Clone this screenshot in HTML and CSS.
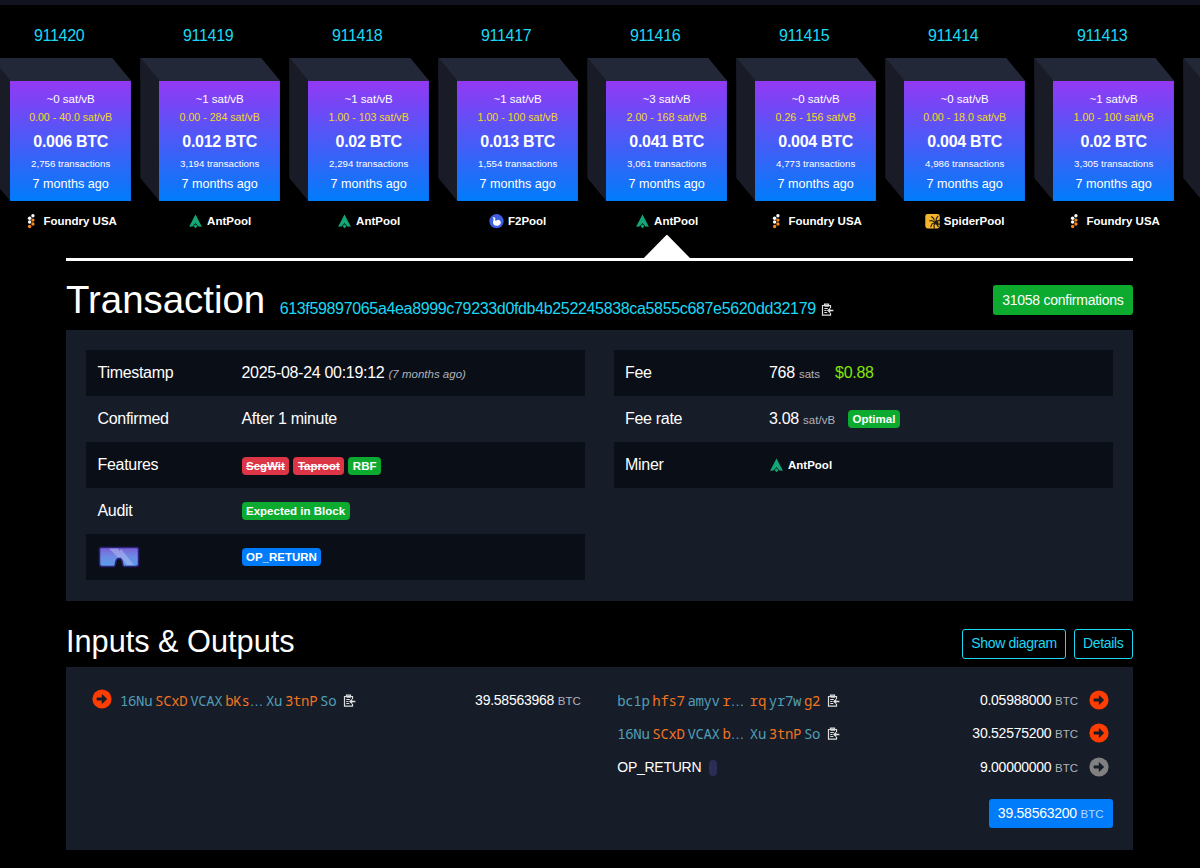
FILE: index.html
```html
<!DOCTYPE html>
<html lang="en">
<head>
  <meta charset="UTF-8">
  <meta name="viewport" content="width=device-width, initial-scale=1.0">
  <title>Transaction 613f59897065a4ea8999c79233d0fdb4b252245838ca5855c687e5620dd32179</title>
  <link rel="stylesheet" href="styles.css">
</head>
<body>
  <!-- Shared icons -->
  <svg class="sprite" aria-hidden="true">
    <symbol id="foundry" viewBox="0 0 16 16">
      <g fill="#fff"><circle cx="9.500" cy="1.900" r="1.800"/><circle cx="6" cy="4.500" r="1.900"/><circle cx="6" cy="8.500" r="1.800"/></g>
      <g fill="#f7871f"><circle cx="9.500" cy="6.500" r="1.800"/><circle cx="9.500" cy="10.700" r="1.800"/><circle cx="6" cy="13.300" r="1.800"/></g>
    </symbol>
    <symbol id="antpool" viewBox="0 0 16 16">
      <path fill="#13a777" d="M8 .4 1.200 13.600l3.600-.4L8 9.200l3.200 4 3.600.4z"/>
      <path fill="#13a777" d="M8 1 4.200 9.500 5 12.500l3-3 3 3 .8-3z"/>
      <path fill="#13a777" d="m8 10.800 2.200 2.100L8 15.200l-2.200-2.300z"/>
    </symbol>
    <symbol id="f2pool" viewBox="0 0 16 16">
      <circle cx="8" cy="7.700" r="7.600" fill="#3e5fe0"/>
      <path fill="#fff" d="M4 3.800c1-.8 2.700-.2 2.700 1.200l-.3 2c1.300-.2 2.200.2 2.900-.8.800-.3 2.700.6 3.300 2.200.2 2-1.200 4-4.200 4-3 .1-4.500-1.600-4.100-3.900l.7-3z"/>
    </symbol>
    <symbol id="spider" viewBox="0 0 16 16">
      <rect x=".3" width="15.400" height="15.400" rx="2.500" fill="#f4b52c"/>
      <path d="M11 9 7 7 4.500 7.500M11 9 7.500 10.500 6 14M10 7 9 4.500 6.500 2.500M12 8V5l2-3M12 8l4-1.500M12 10l4 1M11 10l-1.500 2 .5 3.500M12 10l2.500 4" fill="none" stroke="#221c12" stroke-width="1.200"/>
      <circle cx="12" cy="9" r="2.200" fill="#221c12"/>
    </symbol>
    <symbol id="copy" viewBox="0 0 13 13">
      <path d="M9.500 5V2.500h-8v9.600h8v-2M3.500 2.500V1.200h4v2h-4M3.300 5.500h3.500M3.300 7.500h2.200M3.300 9.500h3" fill="none" stroke="currentColor" stroke-width="1.200"/>
      <path d="M12.400 7.500H7.500M9.300 5.400 7 7.500l2.300 2.100" fill="none" stroke="currentColor" stroke-width="1.400"/>
    </symbol>
    <symbol id="arrow" viewBox="0 0 20 20">
      <circle cx="10" cy="10" r="9.600" fill="currentColor"/>
      <path fill="#171c29" d="M5.200 8.500h4.600V5.800q0-.9.700-.3l4.200 3.900q.6.600 0 1.200l-4.200 3.900q-.7.600-.7-.3v-2.800H5.200q-.6 0-.6-.6V9.100q0-.6.600-.6z"/>
    </symbol>
  </svg>

  <div class="top-strip"></div>

  <div class="blockchain">
    <div class="block">
      <a class="height">911420</a>
      <div class="cube"><div class="face">
        <div class="median">~0 sat/vB</div><div class="range">0.00 - 40.0 sat/vB</div><div class="fees">0.006 BTC</div>
        <div class="count">2,756 transactions</div><div class="ago">7 months ago</div>
      </div></div>
      <div class="pool"><svg><use href="#foundry"/></svg>Foundry USA</div>
    </div>
    <div class="block">
      <a class="height">911419</a>
      <div class="cube"><div class="face">
        <div class="median">~1 sat/vB</div><div class="range">0.00 - 284 sat/vB</div><div class="fees">0.012 BTC</div>
        <div class="count">3,194 transactions</div><div class="ago">7 months ago</div>
      </div></div>
      <div class="pool"><svg><use href="#antpool"/></svg>AntPool</div>
    </div>
    <div class="block">
      <a class="height">911418</a>
      <div class="cube"><div class="face">
        <div class="median">~1 sat/vB</div><div class="range">1.00 - 103 sat/vB</div><div class="fees">0.02 BTC</div>
        <div class="count">2,294 transactions</div><div class="ago">7 months ago</div>
      </div></div>
      <div class="pool"><svg><use href="#antpool"/></svg>AntPool</div>
    </div>
    <div class="block">
      <a class="height">911417</a>
      <div class="cube"><div class="face">
        <div class="median">~1 sat/vB</div><div class="range">1.00 - 100 sat/vB</div><div class="fees">0.013 BTC</div>
        <div class="count">1,554 transactions</div><div class="ago">7 months ago</div>
      </div></div>
      <div class="pool"><svg><use href="#f2pool"/></svg>F2Pool</div>
    </div>
    <div class="block">
      <a class="height">911416</a>
      <div class="cube"><div class="face">
        <div class="median">~3 sat/vB</div><div class="range">2.00 - 168 sat/vB</div><div class="fees">0.041 BTC</div>
        <div class="count">3,061 transactions</div><div class="ago">7 months ago</div>
      </div></div>
      <div class="pool"><svg><use href="#antpool"/></svg>AntPool</div>
      <div class="pointer"></div>
    </div>
    <div class="block">
      <a class="height">911415</a>
      <div class="cube"><div class="face">
        <div class="median">~0 sat/vB</div><div class="range">0.26 - 156 sat/vB</div><div class="fees">0.004 BTC</div>
        <div class="count">4,773 transactions</div><div class="ago">7 months ago</div>
      </div></div>
      <div class="pool"><svg><use href="#foundry"/></svg>Foundry USA</div>
    </div>
    <div class="block">
      <a class="height">911414</a>
      <div class="cube"><div class="face">
        <div class="median">~0 sat/vB</div><div class="range">0.00 - 18.0 sat/vB</div><div class="fees">0.004 BTC</div>
        <div class="count">4,986 transactions</div><div class="ago">7 months ago</div>
      </div></div>
      <div class="pool"><svg><use href="#spider"/></svg>SpiderPool</div>
    </div>
    <div class="block">
      <a class="height">911413</a>
      <div class="cube"><div class="face">
        <div class="median">~1 sat/vB</div><div class="range">1.00 - 100 sat/vB</div><div class="fees">0.02 BTC</div>
        <div class="count">3,305 transactions</div><div class="ago">7 months ago</div>
      </div></div>
      <div class="pool"><svg><use href="#foundry"/></svg>Foundry USA</div>
    </div>
    <!-- next block, only its left side is in view -->
    <div class="block partial">
      <a class="height"></a>
      <div class="cube"></div>
    </div>
  </div>

  <main class="container">
    <div class="title-row">
      <h1>Transaction</h1>
      <a class="txid">613f59897065a4ea8999c79233d0fdb4b252245838ca5855c687e5620dd32179</a>
      <svg class="copy"><use href="#copy"/></svg>
      <button class="btn btn-success">31058 confirmations</button>
    </div>

    <section class="panel details">
      <div class="table">
        <div class="row"><span class="label">Timestamp</span><span>2025-08-24 00:19:12 <i class="since">(7 months ago)</i></span></div>
        <div class="row"><span class="label">Confirmed</span><span class="value">After 1 minute</span></div>
        <div class="row low"><span class="label">Features</span><span class="badges"><b class="badge red">SegWit</b><b class="badge red">Taproot</b><b class="badge green">RBF</b></span></div>
        <div class="row"><span class="label">Audit</span><span class="badges"><b class="badge green">Expected in Block</b></span></div>
        <div class="row">
          <span class="label">
            <svg class="goggles" viewBox="0 0 42 22">
              <defs>
                <linearGradient id="lens" x2="0" y2="1"><stop offset="0" stop-color="#7c5fd6"/><stop offset=".5" stop-color="#6c8be4"/><stop offset="1" stop-color="#5a9dea"/></linearGradient>
              </defs>
              <path d="M3 1.500h36q1.500 0 1.500 1.500v15q0 2.500-2.500 2.500H26q-1 0-1.500-3-.5-5-3.500-5t-3.500 5q-.5 3-1.500 3H4q-2.500 0-2.500-2.500V3q0-1.500 1.500-1.500z" fill="url(#lens)" stroke="#2a2076" stroke-width="1.500"/>
              <path d="M11 2.500h9l4 8-4 1zM23 3l13 16h-7L20 7z" fill="#b8c4f4" opacity=".5"/>
            </svg>
          </span>
          <span class="badges"><b class="badge blue">OP_RETURN</b></span>
        </div>
      </div>
      <div class="table">
        <div class="row"><span class="label">Fee</span><span>768 <small>sats</small><span class="fiat">$0.88</span></span></div>
        <div class="row"><span class="label">Fee rate</span><span>3.08 <small>sat/vB</small></span><b class="badge green optimal">Optimal</b></div>
        <div class="row"><span class="label">Miner</span><span class="miner"><svg><use href="#antpool"/></svg>AntPool</span></div>
      </div>
    </section>

    <div class="io-title">
      <h2>Inputs &amp; Outputs</h2>
      <button class="btn btn-outline">Show diagram</button>
      <button class="btn btn-outline">Details</button>
    </div>

    <section class="panel io">
      <div class="side inputs">
        <div class="io-row">
          <svg class="arrow"><use href="#arrow"/></svg>
          <span class="address"><span>16Nu</span><em>SCxD</em><span>VCAX</span><span class="cut"><em>bKs</em><i>…</i></span><span>Xu</span><em>3tnP</em><span>So</span></span>
          <svg class="copy"><use href="#copy"/></svg>
          <span class="amount">39.58563968 <small>BTC</small></span>
        </div>
      </div>
      <div class="side outputs">
        <div class="io-row">
          <span class="address short"><span>bc1p</span><em>hfs7</em><span>amyv</span><span class="cut"><em>r</em><i>…</i></span><em>rq</em><span>yr7w</span><em>g2</em></span>
          <svg class="copy"><use href="#copy"/></svg>
          <span class="amount">0.05988000 <small>BTC</small></span>
          <svg class="arrow"><use href="#arrow"/></svg>
        </div>
        <div class="io-row">
          <span class="address short"><span>16Nu</span><em>SCxD</em><span>VCAX</span><span class="cut"><em>b</em><i>…</i></span><span>Xu</span><em>3tnP</em><span>So</span></span>
          <svg class="copy"><use href="#copy"/></svg>
          <span class="amount">30.52575200 <small>BTC</small></span>
          <svg class="arrow"><use href="#arrow"/></svg>
        </div>
        <div class="io-row">
          <span class="op-return">OP_RETURN</span><span class="message"></span>
          <span class="amount">9.00000000 <small>BTC</small></span>
          <svg class="arrow unspent"><use href="#arrow"/></svg>
        </div>
        <button class="btn btn-primary">39.58563200 <small>BTC</small></button>
      </div>
    </section>
  </main>
</body>
</html>
```
FILE: styles.css
```css
:root {
  --bg: #000;
  --panel: #171c29;
  --stripe: #0a0e16;
  --link: #1bd8f4;
  --green: #0cab30;
  --blue: #007cfa;
  --red: #dc3545;
  --orange: #ff3d00;
}

* {
  margin: 0;
  padding: 0;
  box-sizing: border-box;
}

body {
  font-family: "Liberation Sans", Arial, sans-serif;
  font-size: 16px;
  letter-spacing: -0.3px;
  line-height: 23px;
  color: #fff;
  background: var(--bg);
  height: 868px;
  overflow: hidden;
}

svg {
  display: block;
  flex: none;
}

.sprite {
  position: absolute;
  width: 0;
  height: 0;
}

.top-strip {
  height: 5px;
  background: #11131f;
}

/* Blocks */
.blockchain {
  display: flex;
  gap: 9.5px;
  height: 253px;
  margin-left: -8.6px;
}

.block {
  flex: none;
  width: 139.5px;
  position: relative;
  letter-spacing: 0;
}

.block.partial {
  width: 17px;
  overflow: hidden;
}

.height {
  display: block;
  height: 52.5px;
  padding: 19px 4px 0 0;
  text-align: center;
  letter-spacing: -0.3px;
  color: var(--link);
}

.cube {
  width: 139.5px;
  height: 143.5px;
  padding: 23px 0 0 19px;
  background: linear-gradient(#232838 23px, #191c27 23px);
  clip-path: polygon(0 0, 120.5px 0, 100% 23px, 100% 100%, 19px 100%, 0 120.5px);
  position: relative;
}

/* left side of the cube */
.cube::before {
  content: '';
  position: absolute;
  inset: 0 auto 0 0;
  width: 19px;
  background: #191c27;
  clip-path: polygon(0 0, 100% 23px, 100% 100%, 0 120.5px);
}

.face {
  height: 120.5px;
  padding-top: 9.5px;
  text-align: center;
  background: linear-gradient(#9339f4, #007cfa);
}

.median {
  font-size: 11.5px;
  line-height: 18px;
}

.range {
  font-size: 10.6px;
  line-height: 19px;
  color: #f5d91e;
}

.fees {
  font-size: 16px;
  line-height: 29px;
  font-weight: bold;
  letter-spacing: -0.3px;
}

.count {
  font-size: 9.7px;
  line-height: 16px;
}

.ago {
  font-size: 12.6px;
  line-height: 24px;
}

.pool {
  display: flex;
  justify-content: center;
  align-items: center;
  gap: 4px;
  height: 20px;
  margin-top: 10px;
  padding-left: 19px;
  font-size: 11.5px;
  font-weight: bold;
}

.pool svg,
.miner svg {
  width: 15px;
  height: 15px;
}

.pointer {
  position: absolute;
  left: 55px;
  top: 229.5px;
  width: 49px;
  height: 25px;
  background: #fff;
  clip-path: polygon(50% 0, 100% 100%, 0 100%);
}

/* Page */
.container {
  width: 1066.5px;
  margin-left: 66px;
  border-top: 3.5px solid #fff;
}

.title-row {
  display: flex;
  align-items: flex-start;
  height: 69px;
}

h1,
h2 {
  font-weight: normal;
  letter-spacing: 0;
}

h1 {
  font-size: 38.4px;
  line-height: 46px;
  margin: 16px 14.5px 0 0;
}

.txid {
  margin-top: 36px;
  letter-spacing: -0.34px;
  color: var(--link);
}

.copy {
  width: 13px;
  height: 13px;
  color: #ddd;
}

.title-row .copy {
  margin: 41.5px 0 0 5px;
}

.btn {
  height: 29.5px;
  padding: 0 8px 1px;
  font: 14px "Liberation Sans", Arial, sans-serif;
  letter-spacing: -0.25px;
  color: #fff;
  border: 1px solid transparent;
  border-radius: 3px;
  white-space: nowrap;
}

.btn-success {
  height: 30px;
  margin: 24px 0 0 auto;
  padding-bottom: 0;
  background: var(--green);
}

.btn-outline {
  letter-spacing: -0.32px;
  color: var(--link);
  background: transparent;
  border-color: var(--link);
}

.btn-primary {
  background: var(--blue);
}

.panel {
  background: var(--panel);
}

.details {
  display: grid;
  grid-template-columns: 1fr 1fr;
  gap: 28.5px;
  height: 270.5px;
  padding: 20px;
}

.row {
  display: flex;
  align-items: center;
  height: 46.1px;
  padding-left: 11.5px;
}

.row:nth-child(odd) {
  background: var(--stripe);
}

.label {
  width: 144px;
  padding-bottom: 2px;
}

.value {
  padding-bottom: 2px;
}

small,
.since {
  font-size: 11.5px;
  letter-spacing: 0;
  color: #b0b3bb;
}

.badges {
  display: flex;
  gap: 4px;
}

.low .badges {
  padding-top: 2px;
}

.badge {
  height: 18px;
  padding: 0 4.5px;
  font-size: 11.5px;
  line-height: 18px;
  letter-spacing: 0;
  border-radius: 4px;
}

.green {
  background: var(--green);
}

.blue {
  background: var(--blue);
}

.red {
  background: var(--red);
  text-decoration: line-through;
}

.optimal {
  margin-left: 13px;
}

.fiat {
  margin-left: 15px;
  color: #84e30a;
}

.goggles {
  width: 42px;
  height: 22px;
  margin-top: 2px;
}

.miner {
  display: flex;
  align-items: center;
  gap: 4px;
  padding-top: 1px;
  font-size: 11.5px;
  font-weight: bold;
  letter-spacing: 0;
}

.io-title {
  display: flex;
  align-items: flex-end;
  gap: 8px;
  height: 66px;
  padding-bottom: 8px;
}

h2 {
  font-size: 30.7px;
  line-height: 37px;
  margin: 0 auto -1px 0;
}

/* Inputs and outputs */
.io {
  display: grid;
  grid-template-columns: 1fr 1fr;
  height: 183px;
  padding-top: 17px;
}

.inputs {
  padding: 0 18.5px 0 26px;
}

.outputs {
  display: flex;
  flex-direction: column;
  padding: 0 24px 0 18px;
}

.io-row {
  display: flex;
  align-items: center;
  height: 33.3px;
}

.address {
  display: flex;
  gap: 2.9px;
  padding-top: 2px;
  font-family: "Noto Sans Mono", "DejaVu Sans Mono", monospace;
  font-size: 14px;
  letter-spacing: -0.35px;
  color: #529fb5;
}

.address em {
  font-style: normal;
  color: #ef7420;
}

.cut i {
  font-family: "Liberation Sans", sans-serif;
  font-style: normal;
}

.short .cut {
  margin-right: 2.7px;
}

.io-row .copy {
  margin-left: 6.5px;
}

.amount,
.op-return {
  padding-top: 2px;
  font-size: 14px;
  letter-spacing: -0.25px;
}

.amount {
  margin-left: auto;
}

.arrow {
  width: 20px;
  height: 20px;
  color: var(--orange);
}

.inputs .arrow {
  margin: 0 8px 2px 0;
}

.outputs .arrow {
  margin-left: 10.5px;
}

.outputs .unspent {
  color: #808080;
}

.message {
  width: 8px;
  height: 16px;
  margin: 2px 0 0 8px;
  border-radius: 4px;
  background: #2b2d56;
}

.btn-primary {
  align-self: flex-end;
  margin: 15.5px -4px 0 0;
}

.btn-primary small {
  color: #b5d8ff;
}
```
